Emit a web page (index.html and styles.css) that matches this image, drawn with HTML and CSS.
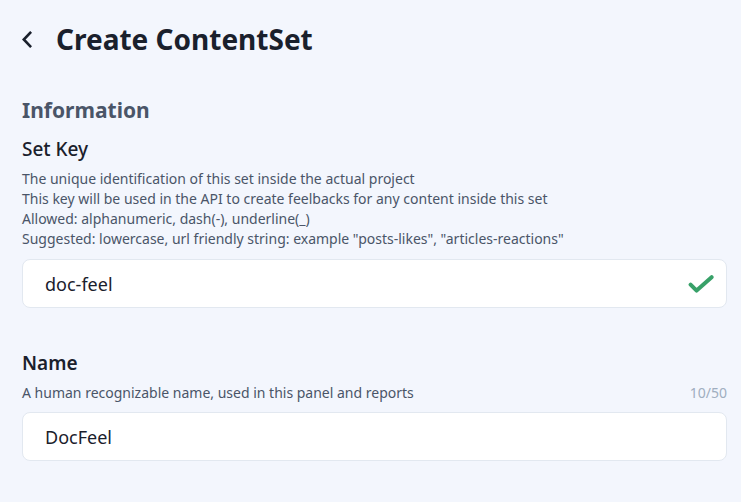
FILE: index.html
```html
<!DOCTYPE html>
<html lang="en">
<head>
<meta charset="utf-8">
<title>Create ContentSet</title>
<link rel="stylesheet" href="styles.css">
</head>
<body>
<main class="page">
  <header class="page-header">
    <button class="back" type="button" aria-label="Back">
      <svg width="10" height="17" viewBox="0 0 10 17" aria-hidden="true">
        <polyline points="8.2,1.8 1.8,8.5 8.2,15.2" fill="none" stroke="#1a202c" stroke-width="2.6" stroke-linecap="square" stroke-linejoin="miter"/>
      </svg>
    </button>
    <h1 class="page-title">Create ContentSet</h1>
  </header>

  <section class="section">
    <h2 class="section-title">Information</h2>

    <div class="field">
      <label class="field-label" for="set-key">Set Key</label>
      <div class="help">
        <p>The unique identification of this set inside the actual project</p>
        <p>This key will be used in the API to create feelbacks for any content inside this set</p>
        <p>Allowed: alphanumeric, dash(-), underline(_)</p>
        <p>Suggested: lowercase, url friendly string: example "posts-likes", "articles-reactions"</p>
      </div>
      <div class="input-wrap">
        <input id="set-key" class="input" type="text" value="doc-feel">
        <svg class="valid-icon" width="26" height="20" viewBox="0 0 26 20" aria-hidden="true">
          <polyline points="2.6,10.6 8.6,16.6 23.6,3.2" fill="none" stroke="#38a169" stroke-width="4" stroke-linecap="round" stroke-linejoin="round"/>
        </svg>
      </div>
    </div>

    <div class="field">
      <label class="field-label strong" for="name">Name</label>
      <div class="help help-row">
        <p>A human recognizable name, used in this panel and reports</p>
        <span class="counter">10/50</span>
      </div>
      <div class="input-wrap">
        <input id="name" class="input" type="text" value="DocFeel">
      </div>
    </div>
  </section>
</main>
</body>
</html>
```

FILE: styles.css
```css
* { box-sizing: border-box; }

html, body {
  margin: 0;
  padding: 0;
  background: #f3f6fd;
}

body {
  font-family: "Noto Sans", "Open Sans", sans-serif;
  color: #1a202c;
}

.page {
  padding: 21px 14px 0 22px;
}

.page-header {
  display: flex;
  align-items: center;
  gap: 24px;
  height: 36px;
}

.back {
  display: flex;
  align-items: center;
  padding: 0;
  margin: 0;
  border: 0;
  background: none;
  width: 10px;
  height: 17px;
  cursor: pointer;
}

.page-title {
  margin: 0;
  font-size: 28px;
  line-height: 36px;
  font-weight: 700;
  color: #1a202c;
}

.section {
  margin-top: 37px;
}

.section-title {
  margin: 0 0 9px;
  font-size: 21px;
  line-height: 32px;
  font-weight: 700;
  color: #4a5568;
}

.field + .field {
  margin-top: 41px;
}

.field-label {
  display: block;
  font-size: 19px;
  line-height: 28px;
  font-weight: 500;
  color: #1a202c;
  margin-bottom: 6px;
}

.field-label.strong {
  font-weight: 600;
}

.help {
  font-size: 14px;
  line-height: 20px;
  color: #4a5568;
  margin-bottom: 10px;
}

.help p {
  margin: 0;
}

.help-row {
  display: flex;
  justify-content: space-between;
  align-items: baseline;
  margin-bottom: 9px;
}

.counter {
  color: #a0aec0;
  font-size: 14px;
}

.input-wrap {
  display: flex;
  align-items: center;
  height: 49px;
  background: #ffffff;
  border: 1px solid #e2e8f0;
  border-radius: 8px;
  padding: 0 12px 0 22px;
}

.input {
  flex: 1;
  min-width: 0;
  border: 0;
  outline: none;
  background: transparent;
  padding: 0;
  font-family: inherit;
  font-size: 18px;
  color: #1a202c;
}

.valid-icon {
  flex: none;
  display: block;
}
```
